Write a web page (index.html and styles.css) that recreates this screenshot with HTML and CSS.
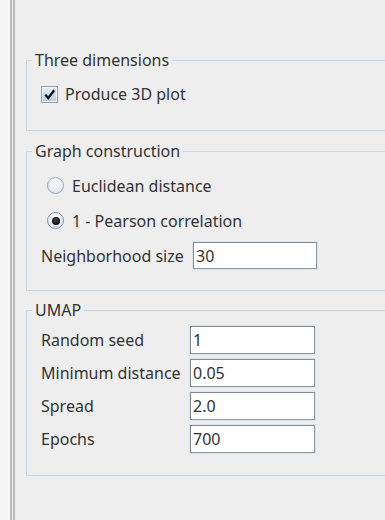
FILE: index.html
```html
<!DOCTYPE html>
<html>
<head>
<meta charset="utf-8">
<link rel="stylesheet" href="styles.css">
</head>
<body>
<div class="app">
  <div class="side"></div>
  <div class="divider"></div>
  <div class="main">
    <fieldset class="group g1">
      <legend>Three dimensions</legend>
      <div class="check-row">
        <span class="checkbox"><svg width="15" height="15" viewBox="0 0 15 15"><path d="M4 8.5 L6.2 11.2 L11.5 4.2" fill="none" stroke="#111" stroke-width="2.3" stroke-linecap="square"/></svg></span>
        <span>Produce 3D plot</span>
      </div>
    </fieldset>
    <fieldset class="group g2">
      <legend>Graph construction</legend>
      <div class="radio-row"><span class="radio"></span><span>Euclidean distance</span></div>
      <div class="radio-row"><span class="radio on"><span class="dot"></span></span><span>1 - Pearson correlation</span></div>
      <div class="field-row nb"><span>Neighborhood size</span><span class="field">30</span></div>
    </fieldset>
    <fieldset class="group g3">
      <legend>UMAP</legend>
      <div class="field-row um"><span>Random seed</span><span class="field">1</span></div>
      <div class="field-row um"><span>Minimum distance</span><span class="field">0.05</span></div>
      <div class="field-row um"><span>Spread</span><span class="field">2.0</span></div>
      <div class="field-row um"><span>Epochs</span><span class="field">700</span></div>
    </fieldset>
  </div>
</div>
</body>
</html>
```

FILE: styles.css
```css
html, body {
  margin: 0;
  padding: 0;
  width: 385px;
  height: 520px;
  overflow: hidden;
  background: #eeeeee;
  font-family: "Noto Sans", "Open Sans", sans-serif;
  font-size: 16px;
  color: #333333;
}
.app {
  display: flex;
  height: 520px;
}
.side {
  width: 10px;
  flex: none;
  background: #f5f5f5;
}
.divider {
  width: 1px;
  flex: none;
  border-left: 2px solid #b9b9b9;
  border-right: 2px solid #b9b9b9;
  background: #e9e9e9;
}
.main {
  flex: 1;
  min-width: 0;
  padding-left: 11px;
  padding-top: 50px;
}
.group {
  margin: 0;
  border: 1px solid #c7d7e7;
  border-right: none;
  padding: 0 0 0 14px;
  min-width: 0;
}
.group legend {
  padding: 0 3px;
  margin-left: -9px;
  line-height: 20px;
  height: 20px;
  color: #333333;
}
.g1 { padding-top: 14px; padding-bottom: 26px; }
.g2 { margin-top: 10px; padding-top: 11px; padding-bottom: 21px; }
.g3 { margin-top: 9px; padding-top: 6px; padding-bottom: 22px; }

.check-row {
  display: flex;
  align-items: center;
  height: 20px;
  gap: 7px;
}
.checkbox {
  width: 15px;
  height: 15px;
  border: 1px solid #8fa2b6;
  background: linear-gradient(#e4eef8, #b7cce2);
  display: flex;
  align-items: center;
  justify-content: center;
  box-shadow: inset 0 0 0 1px #eef4fa;
}
.checkbox svg { display: block; }

.radio-row {
  display: flex;
  align-items: center;
  height: 27px;
  margin-bottom: 8px;
  padding-left: 6px;
  gap: 8px;
}
.radio {
  width: 15px;
  height: 15px;
  border-radius: 50%;
  border: 1px solid #97a9bb;
  background: radial-gradient(circle at 50% 35%, #ffffff 0%, #e6eef6 55%, #c2d3e4 100%);
  display: flex;
  align-items: center;
  justify-content: center;
}
.radio.on {
  border-color: #7f93a8;
}
.radio .dot {
  width: 8px;
  height: 8px;
  border-radius: 50%;
  background: radial-gradient(circle at 45% 40%, #444 0%, #0d0d0d 70%);
}

.field-row {
  display: grid;
  align-items: center;
}
.field-row.nb {
  grid-template-columns: 152px 124px;
  height: 27px;
}
.field-row.um {
  grid-template-columns: 149px 125px;
  height: 28px;
  margin-bottom: 5px;
}
.field-row.um:last-child { margin-bottom: 0; }
.field {
  box-sizing: border-box;
  height: 100%;
  background: #ffffff;
  border: 1px solid #8c99a7;
  border-top-color: #7f8c9a;
  border-left-color: #7f8c9a;
  box-shadow: 0 0 0 1px #dde3e9;
  padding-left: 2px;
  display: flex;
  align-items: center;
  color: #333333;
}
```
